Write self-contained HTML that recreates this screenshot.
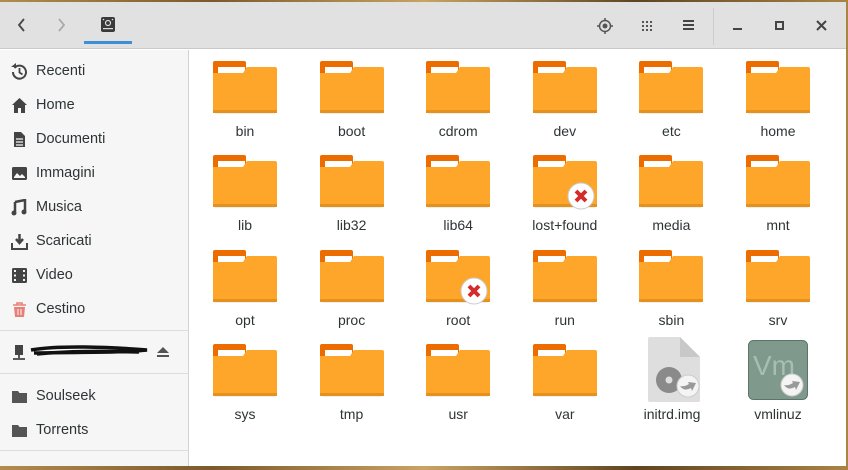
<!DOCTYPE html>
<html><head><meta charset="utf-8"><style>
*{margin:0;padding:0;box-sizing:border-box}
body{width:848px;height:470px;overflow:hidden;background:#8a6d3b;font-family:"Liberation Sans","DejaVu Sans",sans-serif;position:relative}
.wall{position:absolute;inset:0;background:linear-gradient(90deg,#b08d4e,#7a5a2c,#c7a463,#5e4422,#a88545)}
.win{position:absolute;left:0;top:2px;width:846px;height:464px;background:#fff;overflow:hidden}
.hdr{position:absolute;left:0;top:0;width:846px;height:47px;background:#e1e1e1;border-bottom:1px solid #c9c9c9}
.side{position:absolute;left:0;top:48px;width:189px;height:420px;background:#f6f6f6;border-right:1px solid #d2d2d2}
.it{position:absolute;left:0;height:20px;font-size:14.5px;color:#2e3436;line-height:20px}
.it span{position:absolute;left:36px;white-space:nowrap}
.it svg{position:absolute;left:11px;top:2px}
.sep{position:absolute;left:0;width:189px;height:1px;background:#dcdcdc}
.f{position:absolute;width:106px;text-align:center}
.f svg{display:block;margin:0 auto}
.f div{font-size:14px;color:#2e3436;margin-top:9px}
</style></head><body>
<div class="wall"></div>
<div class="win">
<div class="hdr">
<svg style="position:absolute;left:16px;top:14px" width="12" height="18"><path d="M8 3L3 9L8 15" stroke="#444" stroke-width="1.8" fill="none"/></svg>
<svg style="position:absolute;left:55px;top:14px" width="12" height="18"><path d="M4 3L9 9L4 15" stroke="#aaa" stroke-width="1.8" fill="none"/></svg>
<svg style="position:absolute;left:100px;top:14px" width="16" height="18"><rect x="1" y="1" width="14" height="15" rx="2" fill="#3a3a3a"/><circle cx="8" cy="7" r="2.5" fill="none" stroke="#ddd" stroke-width="1.2"/><rect x="3" y="12" width="10" height="1.2" fill="#ddd"/><circle cx="3.5" cy="3.5" r=".8" fill="#ddd"/><circle cx="12.5" cy="3.5" r=".8" fill="#ddd"/></svg>
<div style="position:absolute;left:84px;top:39px;width:48px;height:3px;background:#3d8fd6"></div>
<svg style="position:absolute;left:596px;top:15px" width="18" height="18"><circle cx="9" cy="9" r="5.5" fill="none" stroke="#555" stroke-width="1.5"/><circle cx="9" cy="9" r="2.5" fill="#555"/><path d="M9 1v3M9 14v3M1 9h3M14 9h3" stroke="#555" stroke-width="1.5"/></svg>
<svg style="position:absolute;left:641px;top:18px" width="12" height="12" fill="#555"><rect x="1" y="1" width="2" height="2"/><rect x="5" y="1" width="2" height="2"/><rect x="9" y="1" width="2" height="2"/><rect x="1" y="5" width="2" height="2"/><rect x="5" y="5" width="2" height="2"/><rect x="9" y="5" width="2" height="2"/><rect x="1" y="9" width="2" height="2"/><rect x="5" y="9" width="2" height="2"/><rect x="9" y="9" width="2" height="2"/></svg>
<svg style="position:absolute;left:683px;top:17px" width="12" height="12" fill="#444"><rect x="0" y="1" width="11" height="2"/><rect x="0" y="5" width="11" height="2"/><rect x="0" y="9" width="11" height="2"/></svg>
<div style="position:absolute;left:713px;top:6px;width:1px;height:37px;background:#cdcdcd"></div>
<div style="position:absolute;left:733px;top:26px;width:9px;height:2px;background:#444"></div>
<div style="position:absolute;left:775px;top:19px;width:9px;height:9px;border:2px solid #444"></div>
<svg style="position:absolute;left:816px;top:18px" width="11" height="11"><path d="M1 1L10 10M10 1L1 10" stroke="#444" stroke-width="2"/></svg>
</div>
<div class="side">
<div class="it" style="top:11px"><svg width="17" height="17"><path d="M3.5 5A6.5 6.5 0 1 1 2 9" fill="none" stroke="#444" stroke-width="2"/><path d="M0 4l5 0 0-4z" fill="#444"/><path d="M8.5 5v4.5l3 2" stroke="#444" stroke-width="1.8" fill="none"/></svg><span>Recenti</span></div>
<div class="it" style="top:45px"><svg width="17" height="17"><path d="M8.5 1L1 8h2v8h4v-5h3v5h4V8h2z" fill="#444"/></svg><span>Home</span></div>
<div class="it" style="top:79px"><svg width="17" height="17"><path d="M3 1h7l4 4v11H3z" fill="#444"/><path d="M5 8h7M5 11h7M5 14h7" stroke="#f6f6f6" stroke-width="1.2"/></svg><span>Documenti</span></div>
<div class="it" style="top:113px"><svg width="17" height="17"><rect x="1" y="2" width="15" height="13" rx="1.5" fill="#444"/><path d="M3 12l3-4 3 3 2-2 3 3v1H3z" fill="#f6f6f6"/></svg><span>Immagini</span></div>
<div class="it" style="top:147px"><svg width="17" height="17"><path d="M4 3l10-2v11" stroke="#444" stroke-width="2.5" fill="none"/><path d="M4 3v10" stroke="#444" stroke-width="2.5"/><circle cx="3" cy="14" r="2.5" fill="#444"/><circle cx="13" cy="13" r="2.5" fill="#444"/></svg><span>Musica</span></div>
<div class="it" style="top:181px"><svg width="17" height="17"><path d="M8.5 1v8M5 6l3.5 4 3.5-4" stroke="#444" stroke-width="2.5" fill="none"/><path d="M1 10v6h15v-6" stroke="#444" stroke-width="2" fill="none"/></svg><span>Scaricati</span></div>
<div class="it" style="top:215px"><svg width="17" height="17"><rect x="1" y="1" width="15" height="15" rx="1.5" fill="#444"/><g fill="#f6f6f6"><rect x="3" y="3" width="2" height="2"/><rect x="3" y="7.5" width="2" height="2"/><rect x="3" y="12" width="2" height="2"/><rect x="12" y="3" width="2" height="2"/><rect x="12" y="7.5" width="2" height="2"/><rect x="12" y="12" width="2" height="2"/></g></svg><span>Video</span></div>
<div class="it" style="top:249px"><svg width="17" height="17"><path d="M2 4h13M6 4V2h5v2" stroke="#e88077" stroke-width="1.6" fill="none"/><path d="M3 6h11l-1 10H4z" fill="#e88077"/><path d="M7 8v6M10 8v6" stroke="#f6f6f6" stroke-width="1"/></svg><span>Cestino</span></div>
<div class="sep" style="top:280px"></div>
<div class="it" style="top:292px"><svg width="17" height="17"><rect x="4" y="1" width="8" height="10" fill="#444"/><path d="M8 11v3M2 15h12" stroke="#444" stroke-width="1.8"/></svg>
<svg style="left:29px;top:-1px" width="120" height="20"><path d="M2 9C30 4 80 6 118 9C90 12 50 11 5 12M8 13C40 10 70 10 110 11" stroke="#111" stroke-width="3.5" fill="none"/></svg>
<svg style="left:156px;top:3px" width="14" height="14"><path d="M7 2l6 6H1z M1 10h12v2H1z" fill="#555"/></svg></div>
<div class="sep" style="top:323px"></div>
<div class="it" style="top:336px"><svg width="17" height="17"><path d="M1 3h6l1.5 2H16v10H1z" fill="#555"/></svg><span>Soulseek</span></div>
<div class="it" style="top:370px"><svg width="17" height="17"><path d="M1 3h6l1.5 2H16v10H1z" fill="#555"/></svg><span>Torrents</span></div>
<div class="sep" style="top:400px"></div>
</div>
</div>
<svg width="0" height="0" style="position:absolute"><defs>
<symbol id="fo" viewBox="0 0 64 53"><path d="M2 0h29a2 2 0 0 1 2 2v10H0V2a2 2 0 0 1 2-2z" fill="#ec6c00"/><rect x="5" y="6" width="27" height="6" fill="#fff"/><path d="M0 12h30l4-6h28a2 2 0 0 1 2 2v44H0z" fill="#fda629"/><rect x="0" y="49" width="64" height="3" fill="#e4921d"/><rect x="2" y="52" width="60" height="1" fill="#eee"/></symbol>
<symbol id="x" viewBox="0 0 28 28"><circle cx="14" cy="14" r="13" fill="#fff" stroke="#ccc"/><path d="M9 9l10 10M19 9L9 19" stroke="#d42c2c" stroke-width="4"/></symbol>
</defs></svg>
<div id="grid"></div>
<script>
const names=[["bin","boot","cdrom","dev","etc","home"],["lib","lib32","lib64","lost+found","media","mnt"],["opt","proc","root","run","sbin","srv"],["sys","tmp","usr","var"]];
let h="";const tops=[61,155,250,344];
names.forEach((r,ri)=>r.forEach((n,ci)=>{const x=192+ci*106.6;
let em=(n=="lost+found"||n=="root")?'<svg style="position:absolute;left:55px;top:27px" width="28" height="28"><use href="#x"/></svg>':'';
h+=`<div class="f" style="left:${x}px;top:${tops[ri]}px"><svg width="64" height="53"><use href="#fo"/></svg>${em}<div>${n}</div></div>`;}));
document.getElementById('grid').innerHTML=h;
</script>
<div class="f" style="left:619px;top:337px"><svg width="64" height="66"><path d="M10 0h30l20 20v43a2 2 0 0 1-2 2H10a2 2 0 0 1-2-2V2a2 2 0 0 1 2-2z" fill="#dedede"/><path d="M40 0v20h20z" fill="#c8c8c8"/><circle cx="29" cy="43" r="13" fill="#8a8a8a"/><circle cx="29" cy="43" r="3.5" fill="#dedede"/><circle cx="48" cy="49" r="11" fill="#f4f4f4" stroke="#ccc"/><path d="M40 49q4 6 11 2l1 3 4-8-8-1 1 2q-5 3-9 2z" fill="#999"/></svg><div style="margin-top:3px">initrd.img</div></div>
<div class="f" style="left:725px;top:337px"><svg width="64" height="66"><rect x="2.5" y="3.5" width="59" height="59" rx="5" fill="#7f9a8c" stroke="#5d7569"/><text x="7" y="38" font-family="Liberation Sans" font-size="28" fill="#a9beb3">Vm</text><circle cx="46" cy="48" r="11" fill="#f4f4f4" stroke="#ccc"/><path d="M38 48q4 6 11 2l1 3 4-8-8-1 1 2q-5 3-9 2z" fill="#999"/></svg><div style="margin-top:3px">vmlinuz</div></div>
</body></html>
